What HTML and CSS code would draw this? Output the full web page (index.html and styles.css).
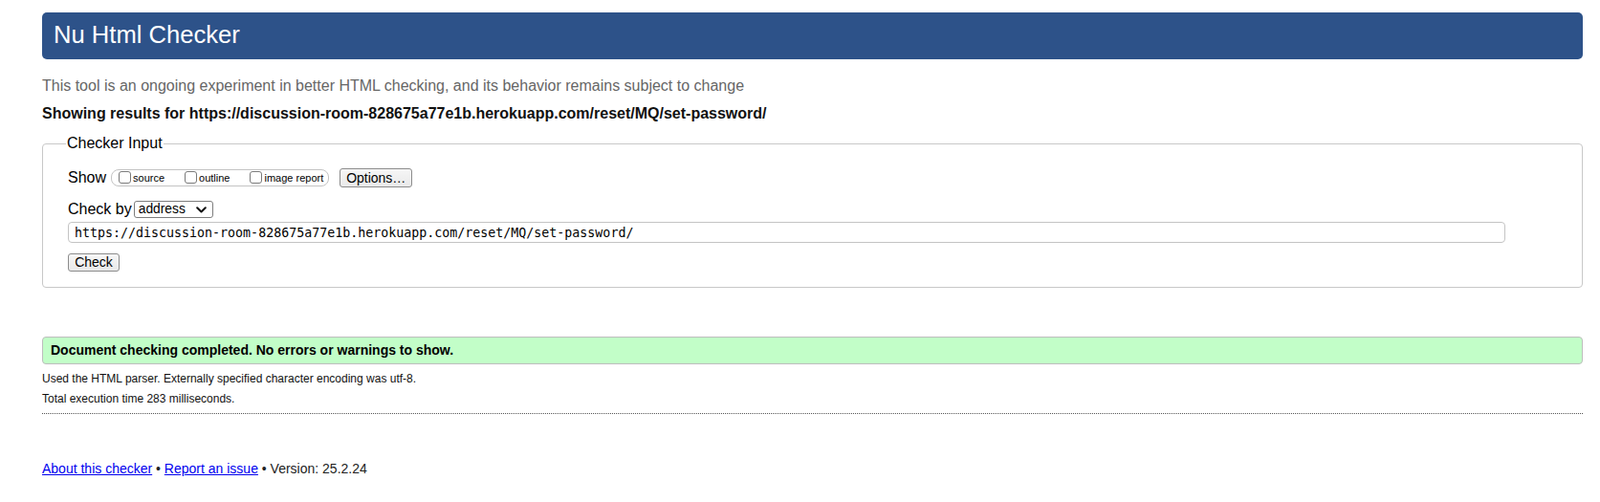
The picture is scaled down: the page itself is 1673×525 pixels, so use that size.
FILE: index.html
```html
<!DOCTYPE html>
<html lang="en">
<head>
<meta charset="utf-8">
<title>Showing results for https://discussion-room-828675a77e1b.herokuapp.com/reset/MQ/set-password/ - Nu Html Checker</title>
<link rel="stylesheet" href="styles.css">
</head>
<body>
<header class="banner">
  <h1 class="title">Nu Html Checker</h1>
</header>
<p class="tagline">This tool is an ongoing experiment in better HTML checking, and its behavior remains subject to change</p>
<p class="showing">Showing results for https://discussion-room-828675a77e1b.herokuapp.com/reset/MQ/set-password/</p>
<form class="checker" action="#">
  <fieldset class="input-set">
    <legend class="legend">Checker Input</legend>
    <div class="row row-show">
      <span class="row-label">Show</span>
      <span class="show-group">
        <label class="opt"><input type="checkbox" class="cb"><span class="opt-text">source</span></label>
        <label class="opt"><input type="checkbox" class="cb"><span class="opt-text">outline</span></label>
        <label class="opt"><input type="checkbox" class="cb"><span class="opt-text">image report</span></label>
      </span>
      <button type="button" class="btn btn-options">Options…</button>
    </div>
    <div class="row row-by">
      <span class="row-label">Check by</span>
      <span class="select-wrap">
        <select class="select"><option>address</option><option>file upload</option><option>text input</option></select>
        <svg class="chev" width="11" height="7" viewBox="0 0 11 7" aria-hidden="true"><path d="M1.2 1.2 L5.5 5.5 L9.8 1.2" fill="none" stroke="#111" stroke-width="2" stroke-linecap="round" stroke-linejoin="round"/></svg>
      </span>
    </div>
    <input class="url" type="url" value="https://discussion-room-828675a77e1b.herokuapp.com/reset/MQ/set-password/">
    <button type="submit" class="btn btn-check">Check</button>
  </fieldset>
</form>
<div class="success">Document checking completed. No errors or warnings to show.</div>
<p class="details details-first">Used the HTML parser. Externally specified character encoding was utf-8.</p>
<p class="details">Total execution time 283 milliseconds.</p>
<hr class="sep">
<footer class="footer">
  <a class="link" href="#">About this checker</a> • <a class="link" href="#">Report an issue</a> • Version: 25.2.24
</footer>
</body>
</html>
```

FILE: styles.css
```css
html {
  background: #fff;
}

body {
  margin: 0;
  padding: 13px 18px 0 44px;
  font-family: "Liberation Sans", Arial, Helvetica, sans-serif;
  color: #000;
}

.banner {
  margin: 0;
}

.title {
  margin: 0;
  padding: 1px 12px 3px;
  line-height: 45px;
  background: #2d5289;
  color: #fff;
  font-size: 25.6px;
  font-weight: normal;
  border-radius: 5px;
}

.tagline {
  margin: 19px 0 0;
  font-size: 16px;
  line-height: 18px;
  color: #666;
}

.showing {
  margin: 11px 0 0;
  font-size: 16px;
  line-height: 18px;
  font-weight: bold;
  color: #111;
}

.checker {
  margin: 0;
}

.input-set {
  margin: 13px 0 0;
  padding: 0 26px 16px;
  border: 1px solid #c8c8c8;
  border-radius: 4px;
  min-width: 0;
}

.legend {
  margin-left: -2px;
  padding: 0 1px;
  font-size: 16px;
  line-height: 18px;
}

.row {
  display: flex;
  align-items: center;
}

.row-label {
  font-size: 16px;
  line-height: 18px;
}

.row-show {
  margin-top: 16px;
  height: 21px;
}

.show-group {
  display: inline-flex;
  align-items: center;
  height: 16px;
  margin-left: 5px;
  padding: 0 5px 0 7px;
  border: 1px solid #c4c4c4;
  border-radius: 8px;
}

.opt {
  display: inline-flex;
  align-items: center;
  gap: 2px;
}

.opt + .opt {
  margin-left: 21px;
}

.cb {
  -webkit-appearance: none;
  appearance: none;
  margin: 0;
  width: 13px;
  height: 13px;
  border: 1px solid #7a7a7a;
  border-radius: 3px;
  background: #fff;
}

.opt-text {
  font-size: 11px;
  line-height: 13px;
  padding-top: 2px;
}

.btn {
  -webkit-appearance: none;
  appearance: none;
  margin: 0;
  padding: 0;
  border: 1px solid #8c8c8c;
  border-radius: 3px;
  background: linear-gradient(#f6f6f6, #e9e9e9);
  color: #000;
  font-family: "Liberation Sans", Arial, Helvetica, sans-serif;
  font-size: 14px;
  text-align: center;
}

.btn-options {
  margin-left: 11px;
  width: 76px;
  height: 20px;
  line-height: 18px;
}

.row-by {
  margin-top: 13px;
  height: 20px;
}

.select-wrap {
  position: relative;
  display: inline-block;
  margin-left: 2px;
  height: 18px;
}

.select {
  -webkit-appearance: none;
  appearance: none;
  margin: 0;
  display: block;
  width: 83px;
  height: 18px;
  padding: 0 0 0 4px;
  border: 1px solid #7d7d7d;
  border-radius: 3px;
  background: #fff;
  color: #000;
  font-family: "Liberation Sans", Arial, Helvetica, sans-serif;
  font-size: 13.8px;
  line-height: 16px;
}

.chev {
  position: absolute;
  right: 7px;
  top: 6px;
  pointer-events: none;
}

.url {
  display: block;
  box-sizing: border-box;
  margin: 3px 0 0;
  width: 1503px;
  height: 22px;
  padding: 0 6px;
  border: 1px solid #c4c4c4;
  border-radius: 4px;
  background: #fff;
  color: #000;
  font-family: "DejaVu Sans Mono", Menlo, monospace;
  font-size: 13.3px;
}

.btn-check {
  display: block;
  margin-top: 11px;
  width: 54px;
  height: 19px;
  line-height: 17px;
}

.success {
  margin-top: 51px;
  padding: 0 8px;
  line-height: 27px;
  border: 1px solid #bdbdbd;
  border-radius: 4px;
  background: #c2fec8;
  font-size: 14px;
  font-weight: bold;
  color: #000;
}

.details {
  margin: 0;
  font-size: 12px;
  line-height: 21px;
  color: #111;
}

.details-first {
  margin-top: 5px;
}

.sep {
  margin: 4px 0 0;
  height: 0;
  border: 0;
  border-top: 1px dotted #555;
}

.footer {
  margin-top: 48px;
  font-size: 14px;
  line-height: 18px;
  color: #222;
}

.link {
  color: #0000ee;
  text-decoration: underline;
}
```
